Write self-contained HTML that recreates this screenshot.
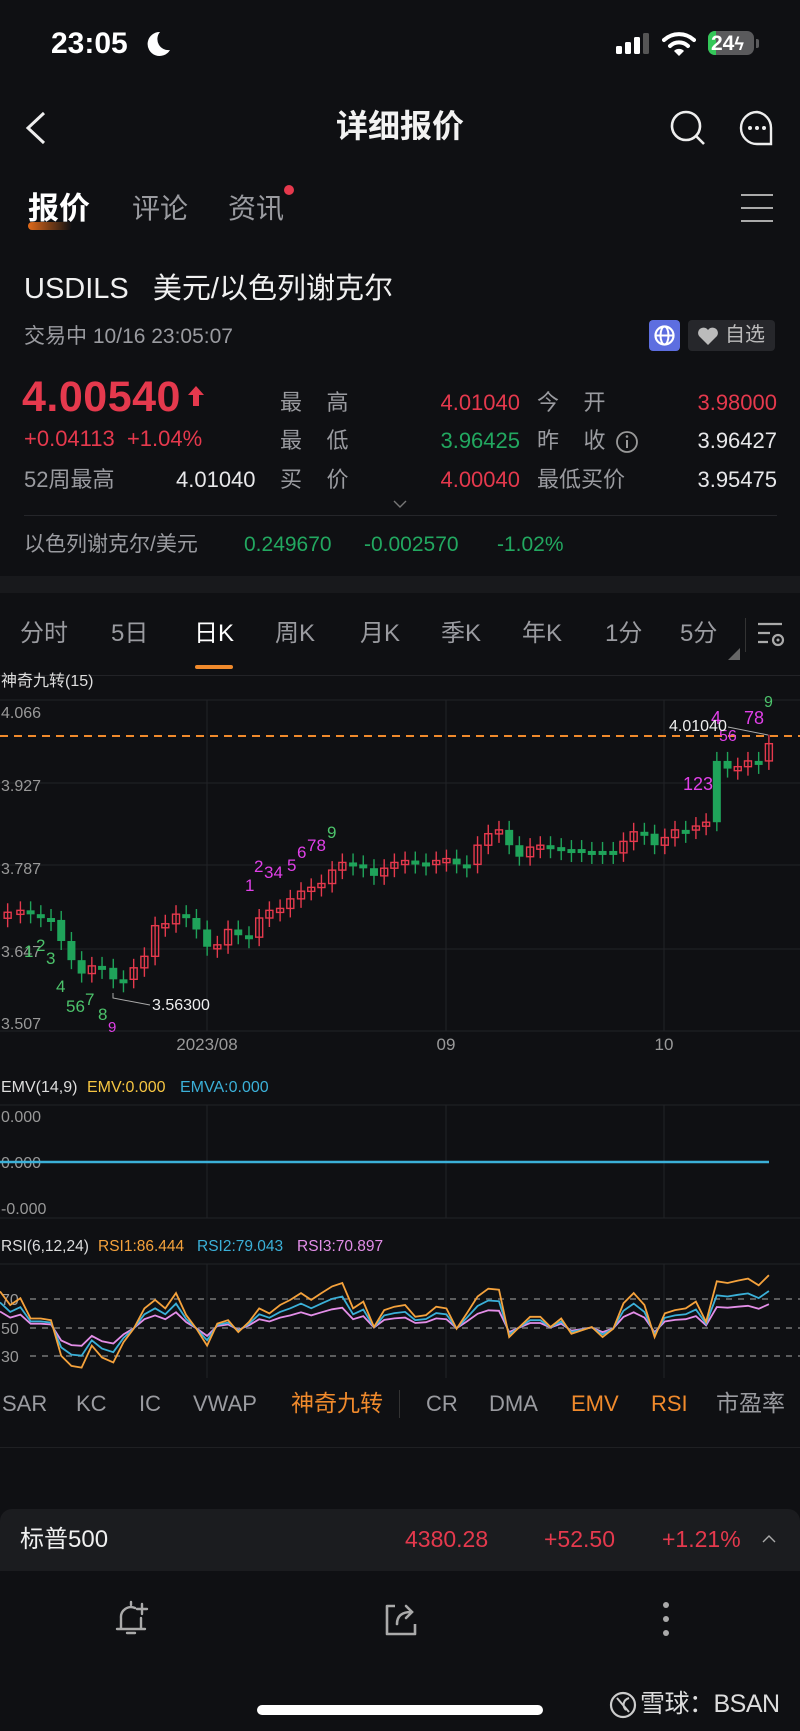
<!DOCTYPE html>
<html><head><meta charset="utf-8">
<style>
*{margin:0;padding:0;box-sizing:border-box}
body{width:800px;height:1731px;background:#0f1013;color:#e8e8ea;font-family:"Liberation Sans","Noto Sans CJK SC",sans-serif;position:relative;overflow:hidden}
.a{position:absolute;white-space:nowrap;line-height:1}
.g{color:#9a9ba0}
.r{color:#e5394d}
.gr{color:#22a860}
.o{color:#f08a2c}
</style></head><body>
<!-- status -->
<div class="a" style="left:51px;top:29px;font-size:30px;font-weight:bold;color:#fff">23:05</div>
<svg class="a" style="left:144px;top:30px" width="28" height="28" viewBox="0 0 28 28"><path d="M16 2a12 12 0 1 0 10 18A11 11 0 0 1 16 2z" fill="#fff"/></svg>
<svg class="a" style="left:614px;top:32px" width="40" height="24"><rect x="2" y="14" width="6" height="8" rx="1.5" fill="#fff"/><rect x="11" y="10" width="6" height="12" rx="1.5" fill="#fff"/><rect x="20" y="5" width="6" height="17" rx="1.5" fill="#fff"/><rect x="29" y="1" width="6" height="21" rx="1.5" fill="#555"/></svg>
<svg class="a" style="left:662px;top:31px" width="34" height="26" viewBox="0 0 34 26"><path d="M2 9a22 22 0 0 1 30 0" stroke="#fff" stroke-width="4" fill="none" stroke-linecap="round"/><path d="M8 15a13 13 0 0 1 18 0" stroke="#fff" stroke-width="4" fill="none" stroke-linecap="round"/><path d="M12 20l5 5 5-5a7 7 0 0 0-10 0z" fill="#fff"/></svg>
<div class="a" style="left:708px;top:31px;width:46px;height:24px;border-radius:7px;background:#5a5a5c;overflow:hidden"><div style="width:8px;height:24px;background:#34c759"></div></div>
<div class="a" style="left:756px;top:39px;width:3px;height:9px;background:#5a5a5c;border-radius:0 2px 2px 0"></div>
<div class="a" style="left:711px;top:33px;font-size:21px;font-weight:bold;color:#fff">24<span style="font-size:18px">ϟ</span></div>
<!-- nav -->
<svg class="a" style="left:22px;top:110px" width="28" height="36"><path d="M22 3L6 18l16 15" stroke="#eee" stroke-width="3" fill="none"/></svg>
<div class="a" style="left:0;width:800px;text-align:center;top:110px;font-size:32px;font-weight:bold;color:#f2f2f2">详细报价</div>
<svg class="a" style="left:669px;top:109px" width="38" height="38"><circle cx="17" cy="17" r="14" stroke="#eee" stroke-width="2.6" fill="none"/><path d="M27 27l8 8" stroke="#eee" stroke-width="2.6"/></svg>
<svg class="a" style="left:738px;top:109px" width="38" height="38"><path d="M19 3a16 16 0 1 0 0 32h14V19A16 16 0 0 0 19 3z" stroke="#eee" stroke-width="2.4" fill="none"/><circle cx="12" cy="19" r="2" fill="#eee"/><circle cx="19" cy="19" r="2" fill="#eee"/><circle cx="26" cy="19" r="2" fill="#eee"/></svg>
<!-- tabs -->
<div class="a" style="left:28px;top:222px;width:44px;height:8px;border-radius:4px;background:linear-gradient(90deg,#e06a1a,rgba(224,106,26,0))"></div>
<div class="a" style="left:28px;top:193px;font-size:31px;font-weight:bold;color:#fff">报价</div>
<div class="a g" style="left:132px;top:195px;font-size:28px">评论</div>
<div class="a g" style="left:228px;top:195px;font-size:28px">资讯</div>
<div class="a" style="left:284px;top:185px;width:10px;height:10px;border-radius:5px;background:#e5394d"></div>
<div class="a" style="left:741px;top:194px;width:32px;height:2px;background:#aaa"></div>
<div class="a" style="left:741px;top:207px;width:32px;height:2px;background:#aaa"></div>
<div class="a" style="left:741px;top:220px;width:32px;height:2px;background:#aaa"></div>
<!-- header info -->
<div class="a" style="left:24px;top:275px;font-size:29px;color:#f0f0f0">USDILS&nbsp;&nbsp; 美元/以色列谢克尔</div>
<div class="a g" style="left:24px;top:326px;font-size:21px">交易中 10/16 23:05:07</div>
<div class="a" style="left:649px;top:320px;width:31px;height:31px;border-radius:4px;background:#5d6ee0"></div>
<svg class="a" style="left:653px;top:324px" width="23" height="23"><circle cx="11.5" cy="11.5" r="9" stroke="#fff" stroke-width="2.2" fill="none"/><ellipse cx="11.5" cy="11.5" rx="4" ry="9" stroke="#fff" stroke-width="2" fill="none"/><path d="M2.5 11.5h18" stroke="#fff" stroke-width="2"/></svg>
<div class="a" style="left:688px;top:320px;width:87px;height:31px;border-radius:4px;background:#26272b"></div>
<svg class="a" style="left:697px;top:326px" width="22" height="20"><path d="M11 19L2 10a5 5 0 0 1 9-6 5 5 0 0 1 9 6z" fill="#bbb"/></svg>
<div class="a g" style="left:725px;top:325px;font-size:20px;color:#bbb">自选</div>
<div class="a r" style="left:22px;top:376px;font-size:43px;font-weight:bold;letter-spacing:0.5px">4.00540</div>
<svg class="a" style="left:186px;top:384px" width="20" height="24"><path d="M10 2l8 9h-5v11H7V11H2z" fill="#e5394d"/></svg>
<div class="a r" style="left:24px;top:428px;font-size:22px">+0.04113&nbsp; +1.04%</div>
<div class="a g" style="left:24px;top:469px;font-size:22px">52周最高</div>
<div class="a" style="left:176px;top:469px;font-size:22px">4.01040</div>
<div class="a g" style="left:280px;top:392px;font-size:22px">最&nbsp;&nbsp;&nbsp;&nbsp;高</div>
<div class="a g" style="left:280px;top:430px;font-size:22px">最&nbsp;&nbsp;&nbsp;&nbsp;低</div>
<div class="a g" style="left:280px;top:469px;font-size:22px">买&nbsp;&nbsp;&nbsp;&nbsp;价</div>
<div class="a r" style="left:380px;width:140px;text-align:right;top:392px;font-size:22px">4.01040</div>
<div class="a gr" style="left:380px;width:140px;text-align:right;top:430px;font-size:22px">3.96425</div>
<div class="a r" style="left:380px;width:140px;text-align:right;top:469px;font-size:22px">4.00040</div>
<div class="a g" style="left:537px;top:392px;font-size:22px">今&nbsp;&nbsp;&nbsp;&nbsp;开</div>
<div class="a g" style="left:537px;top:430px;font-size:22px">昨&nbsp;&nbsp;&nbsp;&nbsp;收</div>
<svg class="a" style="left:615px;top:430px" width="24" height="24"><circle cx="12" cy="12" r="10" stroke="#999" stroke-width="1.8" fill="none"/><path d="M12 10v8" stroke="#999" stroke-width="2"/><circle cx="12" cy="6.5" r="1.3" fill="#999"/></svg>
<div class="a g" style="left:537px;top:469px;font-size:22px">最低买价</div>
<div class="a r" style="left:637px;width:140px;text-align:right;top:392px;font-size:22px">3.98000</div>
<div class="a" style="left:637px;width:140px;text-align:right;top:430px;font-size:22px">3.96427</div>
<div class="a" style="left:637px;width:140px;text-align:right;top:469px;font-size:22px">3.95475</div>
<svg class="a" style="left:392px;top:499px" width="16" height="10"><path d="M2 2l6 6 6-6" stroke="#777" stroke-width="1.4" fill="none"/></svg>
<div class="a" style="left:24px;top:515px;width:753px;height:1px;background:#25262a"></div>
<div class="a g" style="left:24px;top:534px;font-size:21px">以色列谢克尔/美元</div>
<div class="a gr" style="left:244px;top:534px;font-size:21px">0.249670</div>
<div class="a gr" style="left:364px;top:534px;font-size:21px">-0.002570</div>
<div class="a gr" style="left:497px;top:534px;font-size:21px">-1.02%</div>
<div class="a" style="left:0;top:576px;width:800px;height:17px;background:#18191c"></div>
<!-- period tabs -->
<div class="a g" style="left:20px;top:622px;font-size:24px">分时</div>
<div class="a g" style="left:111px;top:622px;font-size:24px">5日</div>
<div class="a" style="left:194px;top:622px;font-size:24px;color:#fff">日K</div>
<div class="a g" style="left:275px;top:622px;font-size:24px">周K</div>
<div class="a g" style="left:360px;top:622px;font-size:24px">月K</div>
<div class="a g" style="left:441px;top:622px;font-size:24px">季K</div>
<div class="a g" style="left:522px;top:622px;font-size:24px">年K</div>
<div class="a g" style="left:605px;top:622px;font-size:24px">1分</div>
<div class="a g" style="left:680px;top:622px;font-size:24px">5分</div>
<div class="a" style="left:195px;top:665px;width:38px;height:4px;border-radius:2px;background:#f08a2c"></div>
<svg class="a" style="left:728px;top:648px" width="12" height="12"><path d="M12 0v12H0z" fill="#666"/></svg>
<div class="a" style="left:745px;top:618px;width:1px;height:34px;background:#333"></div>
<svg class="a" style="left:756px;top:620px" width="30" height="30"><path d="M2 4h24M2 13h12M2 22h10" stroke="#aaa" stroke-width="2.2"/><circle cx="22" cy="20" r="5" stroke="#aaa" stroke-width="2.2" fill="none"/><circle cx="22" cy="20" r="1.5" fill="#aaa"/></svg>
<div class="a" style="left:0;top:675px;width:800px;height:1px;background:#222327"></div>
<div class="a" style="left:1px;top:674px;font-size:16px;color:#ddd">神奇九转(15)</div>
<svg class="a" id="ch" style="left:0;top:0" width="800" height="1731"></svg>
<!-- indicator tabs -->
<div class="a g" style="left:2px;top:1393px;font-size:22px">SAR</div>
<div class="a g" style="left:76px;top:1393px;font-size:22px">KC</div>
<div class="a g" style="left:139px;top:1393px;font-size:22px">IC</div>
<div class="a g" style="left:193px;top:1393px;font-size:22px">VWAP</div>
<div class="a o" style="left:291px;top:1392px;font-size:23px">神奇九转</div>
<div class="a" style="left:399px;top:1390px;width:1px;height:28px;background:#333"></div>
<div class="a g" style="left:426px;top:1393px;font-size:22px">CR</div>
<div class="a g" style="left:489px;top:1393px;font-size:22px">DMA</div>
<div class="a o" style="left:571px;top:1393px;font-size:22px">EMV</div>
<div class="a o" style="left:651px;top:1393px;font-size:22px">RSI</div>
<div class="a g" style="left:716px;top:1392px;font-size:23px">市盈率</div>
<div class="a" style="left:0;top:1447px;width:800px;height:1px;background:#1f2023"></div>
<!-- bottom -->
<div class="a" style="left:0;top:1509px;width:800px;height:62px;background:#1b1c1f;border-radius:12px 12px 0 0"></div>
<div class="a" style="left:20px;top:1528px;font-size:24px;color:#f0f0f0">标普500</div>
<div class="a r" style="left:405px;top:1528px;font-size:23px">4380.28</div>
<div class="a r" style="left:544px;top:1528px;font-size:23px">+52.50</div>
<div class="a r" style="left:662px;top:1528px;font-size:23px">+1.21%</div>
<svg class="a" style="left:761px;top:1533px" width="16" height="12"><path d="M2 9l6-6 6 6" stroke="#aaa" stroke-width="1.4" fill="none"/></svg>
<svg class="a" style="left:113px;top:1598px" width="40" height="42"><path d="M18 4v3M8 31V20a10 10 0 0 1 14-10M28 20v11M4 31h28M14 35h8" stroke="#aaa" stroke-width="2.4" fill="none" stroke-linecap="round"/><path d="M29 6v10M24 11h10" stroke="#aaa" stroke-width="2.4" stroke-linecap="round"/></svg>
<svg class="a" style="left:381px;top:1600px" width="40" height="38"><path d="M14 6H6v28h28v-10" stroke="#aaa" stroke-width="2.6" fill="none" stroke-linejoin="round"/><path d="M16 24c0-8 5-12 14-12M25 6l6 6-6 6" stroke="#aaa" stroke-width="2.6" fill="none" stroke-linecap="round"/></svg>
<svg class="a" style="left:660px;top:1600px" width="12" height="40"><circle cx="6" cy="5" r="3" fill="#aaa"/><circle cx="6" cy="19" r="3" fill="#aaa"/><circle cx="6" cy="33" r="3" fill="#aaa"/></svg>
<div class="a" style="left:257px;top:1705px;width:286px;height:10px;border-radius:5px;background:#fff"></div>
<svg class="a" style="left:608px;top:1690px" width="30" height="30"><circle cx="15" cy="15" r="12" stroke="#ccc" stroke-width="2.2" fill="none"/><path d="M9 8l12 14M21 8c-6 2-7 8-3 12" stroke="#ccc" stroke-width="2" fill="none"/></svg>
<div class="a" style="left:640px;top:1692px;font-size:25px;color:#ddd;letter-spacing:-0.5px">雪球：BSAN</div>
<script>
var s=document.getElementById('ch'),h='';
function L(x1,y1,x2,y2,c,w,d){h+='<line x1="'+x1+'" y1="'+y1+'" x2="'+x2+'" y2="'+y2+'" stroke="'+c+'" stroke-width="'+(w||1)+'"'+(d?' stroke-dasharray="'+d+'"':'')+'/>';}
function T(x,y,t,c,sz,a){h+='<text x="'+x+'" y="'+y+'" fill="'+c+'" font-size="'+(sz||16)+'" font-family="Liberation Sans,sans-serif"'+(a?' text-anchor="'+a+'"':'')+'>'+t+'</text>';}
[700,783,865,949,1031].forEach(function(y){L(0,y,800,y,'#222327');});
[207,446,664].forEach(function(x){L(x,700,x,1031,'#222327');L(x,1105,x,1218,'#222327');L(x,1264,x,1378,'#222327');});
L(0,1105,800,1105,'#222327');L(0,1218,800,1218,'#222327');L(0,1264,800,1264,'#222327');
var lab=[['4.066',718],['3.927',791],['3.787',874],['3.647',957],['3.507',1029]];
lab.forEach(function(l){T(1,l[1],l[0],'#999',16);});
T(207,1050,'2023/08','#999',17,'middle');T(446,1050,'09','#999',17,'middle');T(664,1050,'10','#999',17,'middle');
L(0,736,800,736,'#f08a2c',2,'8,6');
var z=[[15,815],[40,810],[60,820],[80,830],[100,835],[120,890],[140,940],[160,975],[180,955],[200,960],[222,990],[242,990],[262,960],[283,930],[304,850],[324,845],[345,820],[365,830],[385,860],[406,905],[426,900],[447,860],[467,875],[488,880],[508,830],[528,810],[549,805],[569,780],[590,760],[610,750],[630,740],[651,705],[671,685],[692,690],[712,700],[733,720],[753,700],[773,685],[794,680],[814,685],[835,690],[855,680],[875,675],[895,690],[915,690],[936,640],[957,610],[978,600],[998,640],[1018,670],[1039,645],[1059,640],[1079,645],[1100,650],[1120,650],[1140,655],[1160,655],[1181,655],[1202,660],[1222,630],[1242,605],[1263,610],[1283,640],[1303,620],[1323,600],[1344,600],[1364,590],[1384,580],[1405,420],[1426,440],[1446,435],[1466,420],[1487,420],[1507,375]];
var prev=null;
z.forEach(function(p,i){var x=p[0]/1.96,y=p[1]/2.61+600;var o=prev==null?y+6:prev;var up=y<o;
if(p[0]==1405){o=y;y=prev;up=false;}
var c=up?'#e5394d':'#1fa35a';var t=Math.min(o,y),b=Math.max(o,y);if(b-t<4){b=t+4;}
L(x,t-9,x,b+9,c,1.4);
if(up)h+='<rect x="'+(x-3.5)+'" y="'+t+'" width="7" height="'+(b-t)+'" fill="none" stroke="'+c+'" stroke-width="1.4"/>';else h+='<rect x="'+(x-4)+'" y="'+t+'" width="8" height="'+(b-t)+'" fill="'+c+'"/>';
prev=p[1]/2.61+600;});
var G='#4cc36b',M='#e040e8';
T(24,957,'1','#4cc36b',17);T(36,951,'2',G,17);T(46,964,'3',G,17);T(56,992,'4',G,17);T(66,1012,'56',G,17);T(85,1005,'7',G,17);T(98,1020,'8',G,17);T(108,1032,'9',M,15);
T(245,891,'1',M,17);T(254,872,'2',M,17);T(264,878,'34',M,17);T(287,871,'5',M,17);T(297,858,'6',M,17);T(307,851,'78',M,17);T(327,838,'9',G,17);
T(683,790,'123',M,18);T(711,724,'4',M,18);T(719,741,'56',M,16);T(744,724,'78',M,18);T(764,707,'9',G,16);
T(669,731,'4.01040','#eee',16);
h+='<polyline points="113,993 113,998 150,1005" stroke="#aaa" fill="none"/>';T(152,1010,'3.56300','#eee',16);
h+='<polyline points="728,727 768,735" stroke="#aaa" fill="none"/>';
// EMV
T(1,1092,'EMV(14,9)','#ddd',16);T(87,1092,'EMV:0.000','#f5c542',16);T(180,1092,'EMVA:0.000','#3bb0d8',16);
T(1,1122,'0.000','#999',16);T(1,1168,'0.000','#999',16);T(1,1214,'-0.000','#999',16);
L(0,1162,769,1162,'#3bb0d8',2.5);
// RSI
T(1,1251,'RSI(6,12,24)','#ddd',15.5);T(98,1251,'RSI1:86.444','#f5a23c',15.5);T(197,1251,'RSI2:79.043','#3bb0d8',15.5);T(297,1251,'RSI3:70.897','#e38ee8',15.5);
[1299,1328,1356].forEach(function(y){L(30,y,800,y,'#777',1.5,'6,6');});
T(1,1305,'70','#999',16);T(1,1334,'50','#999',16);T(1,1362,'30','#999',16);
var r=[[0,270],[20,310],[40,290],[60,350],[80,350],[100,355],[120,460],[140,490],[160,495],[180,430],[200,465],[222,480],[242,420],[262,380],[283,320],[304,295],[324,320],[345,275],[365,340],[385,380],[406,430],[426,365],[447,355],[467,390],[488,360],[508,320],[528,335],[549,310],[569,295],[590,275],[610,295],[630,275],[651,255],[671,245],[692,320],[712,300],[733,375],[753,325],[773,315],[794,310],[814,345],[835,340],[855,315],[875,320],[895,380],[915,335],[936,285],[957,262],[978,265],[998,405],[1018,375],[1039,345],[1059,345],[1079,375],[1100,350],[1120,395],[1140,385],[1160,375],[1181,405],[1202,380],[1222,305],[1242,275],[1263,310],[1283,405],[1303,335],[1323,325],[1344,320],[1364,300],[1384,360],[1405,240],[1426,245],[1446,238],[1466,232],[1487,252],[1507,222]];
function pl(k,c){var p=r.map(function(q){return (q[0]/1.96).toFixed(1)+','+((378+(q[1]-378)*k)/2.953+1200).toFixed(1);}).join(' ');h+='<polyline points="'+p+'" stroke="'+c+'" stroke-width="1.8" fill="none"/>';}
pl(0.45,'#e38ee8');pl(0.7,'#3bb0d8');pl(1,'#f5a23c');
s.innerHTML=h;
</script>
</body></html>
